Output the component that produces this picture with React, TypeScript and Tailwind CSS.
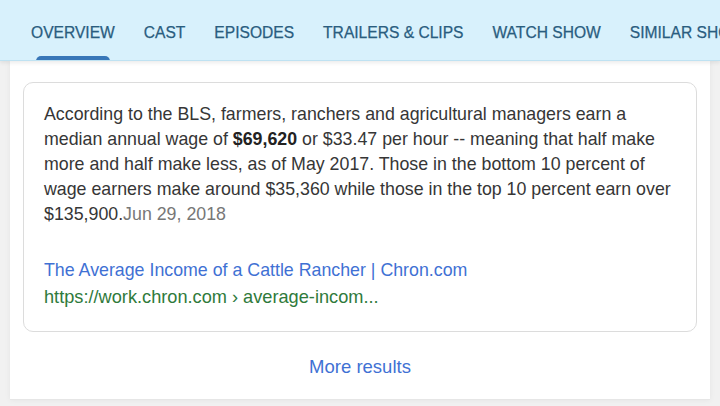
const tabs = ["OVERVIEW", "CAST", "EPISODES", "TRAILERS & CLIPS", "WATCH SHOW", "SIMILAR SHOWS"]

export default function App() {
  return (
    <div className="h-[406px] w-[720px] overflow-hidden bg-[#f1f1f1] font-['Liberation_Sans',Arial,sans-serif]">
      <div className="relative z-10 flex h-[61px] items-stretch gap-[29px] overflow-hidden whitespace-nowrap border-b border-[#bfe2f2] bg-[#d8f1fc] pl-[31px] shadow-[0_2px_4px_rgba(0,0,0,0.08)]">
        {tabs.map((t, i) => (
          <div key={t} className="relative flex shrink-0 items-center text-[15.6px] text-[#2a5d7f] [-webkit-text-stroke:0.25px_#2a5d7f]">
            <span className="pt-[6px]">{t}</span>
            {i === 0 ? (
              <span className="absolute bottom-[-1px] left-[5px] right-[5px] h-[5px] rounded-t-[6px] bg-[#3877b8]" />
            ) : null}
          </div>
        ))}
      </div>

      <div className="mx-[10px] h-[339px] border-b border-[#e6e6e6] bg-white px-[13px] pt-[21px] shadow-[0_0_6px_rgba(0,0,0,0.06)]">
        <div className="h-[250px] w-[674px] rounded-[10px] border border-[#dcdcdc] px-[20px] pt-[19px] text-[#363636]">
          <p className="whitespace-nowrap text-[17.8px] leading-[25px]">
            According to the BLS, farmers, ranchers and agricultural managers earn a
            <br />
            median annual wage of <b className="text-[#222]">$69,620</b> or $33.47 per hour -- meaning that half make
            <br />
            more and half make less, as of May 2017. Those in the bottom 10 percent of
            <br />
            wage earners make around $35,360 while those in the top 10 percent earn over
            <br />
            $135,900.<span className="text-[#777]">Jun 29, 2018</span>
          </p>
          <div className="mt-[31px] text-[17.8px] leading-[25px] text-[#3f71d4]">
            The Average Income of a Cattle Rancher | Chron.com
          </div>
          <div className="mt-[2px] text-[18.2px] leading-[25px] text-[#2f7a3b]">https://work.chron.com › average-incom...</div>
        </div>
        <div className="pt-[21px] text-center text-[18.5px] text-[#3f71d4]">More results</div>
      </div>
    </div>
  )
}
